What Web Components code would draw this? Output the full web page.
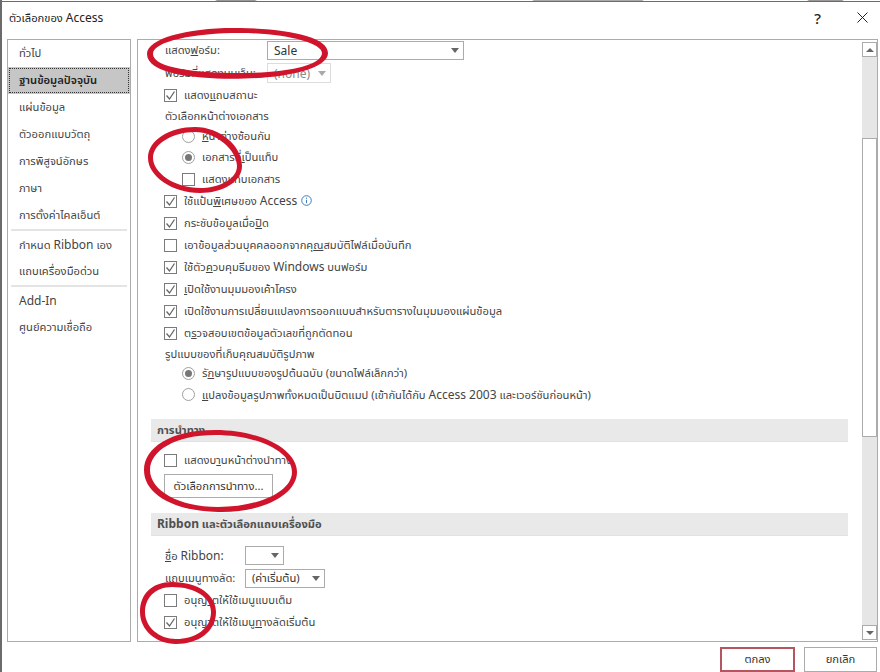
<!DOCTYPE html>
<html lang="th">
<head>
<meta charset="utf-8">
<title>ตัวเลือกของ Access</title>
<style>
  html, body { margin: 0; height: 100%; background: #fff; }
  body { font: 11.2px "Noto Sans", "Noto Sans Thai", "DejaVu Sans", sans-serif; color: #444; overflow: hidden; }
  .en { font-size: 12px; }
</style>
</head>
<body>
<access-dialog>
  <nav-list slot="nav">
    <nav-item>ทั่วไป</nav-item>
    <nav-item active>ฐานข้อมูลปัจจุบัน</nav-item>
    <nav-item>แผ่นข้อมูล</nav-item>
    <nav-item>ตัวออกแบบวัตถุ</nav-item>
    <nav-item>การพิสูจน์อักษร</nav-item>
    <nav-item>ภาษา</nav-item>
    <nav-item>การตั้งค่าไคลเอ็นต์</nav-item>
    <nav-sep></nav-sep>
    <nav-item>กำหนด <span class="en">Ribbon</span> เอง</nav-item>
    <nav-item>แถบเครื่องมือด่วน</nav-item>
    <nav-sep></nav-sep>
    <nav-item><span class="en">Add-In</span></nav-item>
    <nav-item>ศูนย์ความเชื่อถือ</nav-item>
  </nav-list>

  <option-pane slot="pane">
    <field-row style="height:21px"><span slot="label">แสดง<u>ฟ</u>อร์ม:</span><drop-down value="Sale" en width="197" label-gap="102"></drop-down></field-row>
    <field-row style="height:22px;margin-top:1px"><span slot="label">ฟอร์มที่แสดงบนเว็บ:</span><drop-down value="(none)" en width="64" label-gap="102" disabled></drop-down></field-row>
    <opt-row kind="check" checked>แสดง<u>แ</u>ถบสถานะ</opt-row>
    <plain-label style="height:20px">ตัวเลือกหน้าต่างเอกสาร</plain-label>
    <opt-row kind="radio" indent style="height:20px"><u>ห</u>น้าต่างซ้อนกัน</opt-row>
    <opt-row kind="radio" indent checked>เอกสารที่<u>เ</u>ป็นแท็บ</opt-row>
    <opt-row kind="check" indent>แสดงแท็บเอกสาร</opt-row>
    <opt-row kind="check" checked>ใช้แป้น<u>พิ</u>เศษของ <span class="en">Access</span> <info-icon></info-icon></opt-row>
    <opt-row kind="check" checked>กระชับข้อมูลเมื่อ<u>ปิ</u>ด</opt-row>
    <opt-row kind="check">เอาข้อมูลส่วนบุคคลออกจากคุ<u>ณ</u>สมบัติไฟล์เมื่อบันทึก</opt-row>
    <opt-row kind="check" checked>ใช้ตัว<u>ค</u>วบคุมธีมของ <span class="en">Windows</span> บนฟอร์ม</opt-row>
    <opt-row kind="check" checked><u>เ</u>ปิดใช้งานมุมมองเค้าโครง</opt-row>
    <opt-row kind="check" checked>เปิดใช้งานการเปลี่ยนแปลงการออกแบบสำหรับตารางในมุมมองแผ่นข้อมูล</opt-row>
    <opt-row kind="check" checked>ต<u>ร</u>วจสอบเขตข้อมูลตัวเลขที่ถูกตัดทอน</opt-row>
    <plain-label style="height:19px;margin-top:1px">รูปแบบของที่เก็บคุณสมบัติรูปภาพ</plain-label>
    <opt-row kind="radio" indent checked style="height:19px">รั<u>ก</u>ษารูปแบบของรูปต้นฉบับ (ขนาดไฟล์เล็กกว่า)</opt-row>
    <opt-row kind="radio" indent style="height:23px"><u>แ</u>ปลงข้อมูลรูปภาพทั้งหมดเป็นบิตแมป (เข้ากันได้กับ <span class="en">Access 2003</span> และเวอร์ชันก่อนหน้า)</opt-row>

    <section-head style="margin-top:13px">การนำทาง</section-head>
    <opt-row kind="check" style="margin-top:7px">แสดงบ<u>า</u>นหน้าต่างนำทาง</opt-row>
    <push-button style="margin:3px 0 0 13px;width:109px;height:24px">ตัวเลือกการนำทาง...</push-button>

    <section-head style="margin-top:15px"><span class="en">Ribbon</span>&nbsp;และตัวเลือกแถบเครื่องมือ</section-head>
    <field-row style="height:19px;margin-top:10px"><span slot="label"><u>ชื่</u>อ <span class="en">Ribbon:</span></span><drop-down width="39" label-gap="80"></drop-down></field-row>
    <field-row style="height:19px;margin-top:4px"><span slot="label">แถบเมนูทางลัด:</span><drop-down value="(ค่าเริ่มต้น)" width="80" label-gap="80"></drop-down></field-row>
    <opt-row kind="check" style="margin-top:1px">อนุญ<u>า</u>ตให้ใช้เมนูแบบเต็ม</opt-row>
    <opt-row kind="check" checked>อนุญาตให้ใช้เมนู<u>ท</u>างลัดเริ่มต้น</opt-row>
  </option-pane>

  <push-button slot="actions" primary style="width:75px;height:25px">ตกลง</push-button>
  <push-button slot="actions" style="width:73px;height:25px">ยกเลิก</push-button>
</access-dialog>

<script>
function define(name, css, html) {
  customElements.define(name, class extends HTMLElement {
    connectedCallback() {
      if (this.shadowRoot) return;
      this.attachShadow({ mode: 'open' });
      const body = typeof html === 'function' ? html(this) : html;
      this.shadowRoot.innerHTML = `<style>${css}</style>${body}`;
    }
  });
}

define('access-dialog', `
  :host { display: flex; flex-direction: column; width: 880px; height: 672px; box-sizing: border-box;
    border-left: 2px solid #6b6b6b; position: relative; background: #fff; }
  .strip { height: 1px; flex: none; background: linear-gradient(90deg, #fff 213px, #999 215px, #999 253px, #fff 255px, #fff 530px, #aaa 532px, #aaa 640px, #fff 642px, #fff 805px, #999 807px, #999 840px, #fff 842px); }
  .line { height: 1px; flex: none; background: #6b6b6b; margin-left: -2px; }
  .title { height: 37px; flex: none; display: flex; align-items: center; padding-left: 7px; padding-bottom: 6px; box-sizing: border-box; color: #222; font-size: 11.2px; }
  .title span { flex: 1; }
  .title i { font: 12px "Noto Sans", sans-serif; }
  .title button { border: 0; background: none; padding: 0; color: #222; width: 45px; height: 30px; display: flex; align-items: center; justify-content: center; font: 500 15px "Noto Sans", sans-serif; }
  .main { flex: none; height: 603px; display: flex; gap: 6px; padding: 0 2px 0 5px; }
  .foot { flex: 1; display: flex; justify-content: flex-end; gap: 9px; padding: 5px 3px 0 0; }
  ::slotted([slot=nav]) { width: 124px; flex: none; }
  ::slotted([slot=pane]) { flex: 1; min-width: 0; }
`, `
  <div class="strip"></div><div class="line"></div>
  <div class="title"><span>ตัวเลือกของ <i style="font-style:normal">Access</i></span>
    <button aria-label="Help">?</button>
    <button aria-label="Close" style="margin-right:-5px"><svg width="11" height="11" viewBox="0 0 11 11"><path d="M.5.5l10 10M10.500.5l-10 10" stroke="#222" fill="none"/></svg></button>
  </div>
  <div class="main"><slot name="nav"></slot><slot name="pane"></slot></div>
  <div class="foot"><slot name="actions"></slot></div>
  <red-marks></red-marks>
`);

define('nav-list', `
  :host { display: block; box-sizing: border-box; border: 1px solid #ababab; background: #fff; }
`, `<slot></slot>`);

define('nav-item', `
  :host { display: flex; align-items: center; height: 27px; box-sizing: border-box; padding-left: 11px; color: #444; white-space: nowrap; }
  :host([active]) { background: #c6c6c6; outline: 1px dotted #333; outline-offset: -2px; color: #222; font-weight: 600; }
  .t { display: block; }
`, `<span class="t"><slot></slot></span>`);

define('nav-sep', `
  :host { display: block; height: 2px; margin: 0 3px; background: #e4e4e4; }
`, ``);

define('option-pane', `
  :host { display: flex; box-sizing: border-box; border: 1px solid #ababab; background: #fff; overflow: hidden; }
  .body { flex: 1; min-width: 0; padding-left: 13px; padding-right: 14px; overflow: hidden; }
  .bar { flex: none; width: 15px; display: flex; flex-direction: column; margin: 2px 0 1px; box-sizing: border-box; }
  .btn { height: 15px; border: 1px solid #ababab; background: #fff; display: flex; align-items: center; justify-content: center; box-sizing: border-box; flex: none; }
  .track { flex: 1; background: #e6e6e6; display: flex; flex-direction: column; padding-top: 81px; }
  .thumb { height: 299px; box-sizing: border-box; border: 1px solid #ababab; background: #fff; }
  .low { flex: 1; }
`, `
  <div class="body"><slot></slot></div>
  <div class="bar">
    <div class="btn"><svg width="8" height="4"><path d="M0 4L4 0l4 4z" fill="#666"/></svg></div>
    <div class="track"><div class="thumb"></div><div class="low"></div></div>
    <div class="btn"><svg width="8" height="4"><path d="M0 0l4 4 4-4z" fill="#666"/></svg></div>
  </div>
`);

define('field-row', `
  :host { display: flex; align-items: center; margin-left: 14px; white-space: nowrap; color: #444; }
  .lb { width: 0; flex: none; }
`, `<div class="lb"><slot name="label"></slot></div><slot></slot>`);

define('drop-down', `
  :host { display: block; }
  .box { display: flex; align-items: center; height: 19px; box-sizing: border-box; border: 1px solid #ababab; background: #fff; color: #333; padding-left: 6px; font-size: 11.2px; white-space: nowrap; }
  :host([en]) .box { font-size: 12px; }
  .v { flex: 1; }
  svg { margin-right: 4px; flex: none; }
  :host([disabled]) .box { border-color: #dcdcdc; color: #8a8a8a; height: 20px; }
`, el => {
  const w = el.getAttribute('width'), gap = el.getAttribute('label-gap');
  const fill = el.hasAttribute('disabled') ? '#aaa' : '#666';
  return `<div class="box" style="width:${w}px;margin-left:${gap}px"><span class="v">${el.getAttribute('value') || ''}</span><svg width="8" height="5"><path d="M0 0h8L4 5z" fill="${fill}"/></svg></div>`;
});

define('opt-row', `
  :host { display: flex; align-items: center; height: 22px; margin-left: 13px; white-space: nowrap; color: #444; }
  :host([indent]) { margin-left: 31px; }
  .mark { flex: none; width: 13px; height: 13px; margin-right: 7px; box-sizing: border-box; border: 1px solid #7a7a7a; display: flex; align-items: center; justify-content: center; background: #fff; }
  .radio { border-radius: 50%; border-color: #a0a0a0; }
  .dot { width: 7px; height: 7px; border-radius: 50%; background: #777; }
`, el => {
  const radio = el.getAttribute('kind') === 'radio';
  const on = el.hasAttribute('checked');
  const inner = radio
    ? (on ? '<div class="dot"></div>' : '')
    : (on ? '<svg width="11" height="11" viewBox="0 0 11 11"><path d="M1.500 5.500l3 3.500 5-7.500" fill="none" stroke="#666" stroke-width="1.300"/></svg>' : '');
  return `<div class="mark ${radio ? 'radio' : ''}">${inner}</div><span><slot></slot></span>`;
});

define('plain-label', `
  :host { display: flex; align-items: center; margin-left: 14px; white-space: nowrap; color: #444; }
`, `<span><slot></slot></span>`);

define('section-head', `
  :host { display: flex; align-items: center; height: 23px; box-sizing: border-box; padding-left: 6px; background: #e9e9e9; border-bottom: 1px solid #e2e2e2; color: #505050; font-weight: 700; white-space: nowrap; }
`, `<span><slot></slot></span>`);

define('push-button', `
  :host { display: flex; align-items: center; justify-content: center; box-sizing: border-box; border: 1px solid #ababab; background: #fff; color: #333; white-space: nowrap; }
  :host([primary]) { border: 2px solid #b5555f; }
`, `<slot></slot>`);

define('info-icon', `
  :host { display: inline-block; vertical-align: -1px; margin-left: 1px; }
  svg { display: block; }
`, `<svg width="11" height="11" viewBox="0 0 11 11"><circle cx="5.500" cy="5.500" r="4.800" fill="none" stroke="#3f7cbf"/><path d="M5.500 2.600v1.200M5.500 4.800v3.400" stroke="#3f7cbf"/></svg>`);

// hand drawn rings over the dialog, page coordinates
define('red-marks', `
  :host { position: absolute; left: -2px; top: 0; width: 880px; height: 672px; pointer-events: none; }
  svg { display: block; }
  path { fill: #d0142c; fill-rule: evenodd; }
`, `
  <svg width="880" height="672" viewBox="0 0 880 672">
    <path d="M147 54C147 38 190 27 240 28C290 29 328 37 328 53C328 66 300 74 270 77C230 81 147 80 147 54ZM153 54C153 72 225 75 268 72C298 70 322 63 322 53C322 43 285 33 240 33C195 33 153 41 153 54Z"/>
    <path d="M148 158C148 140 170 127 195 127C220 127 242 146 242 166C242 182 222 193 200 193C172 193 148 176 148 158ZM153 158C153 173 175 188 200 188C218 188 237 180 237 166C237 150 216 132 195 132C174 132 153 143 153 158Z"/>
    <path d="M144 470C144 448 170 430 215 430C262 430 297 450 297 472C297 495 262 513 218 512C175 511 144 495 144 470ZM150 470C150 490 178 507 218 507C258 507 292 492 292 472C292 453 260 435 215 435C175 435 150 451 150 470Z"/>
    <path d="M140 612C140 594 152 582 172 582C200 582 216 596 216 612C216 632 198 644 176 644C156 644 140 630 140 612ZM145 612C145 627 159 639 176 639C195 639 211 629 211 612C211 598 196 587 172 587C155 587 145 598 145 612Z"/>
  </svg>
`);
</script>
</body>
</html>
